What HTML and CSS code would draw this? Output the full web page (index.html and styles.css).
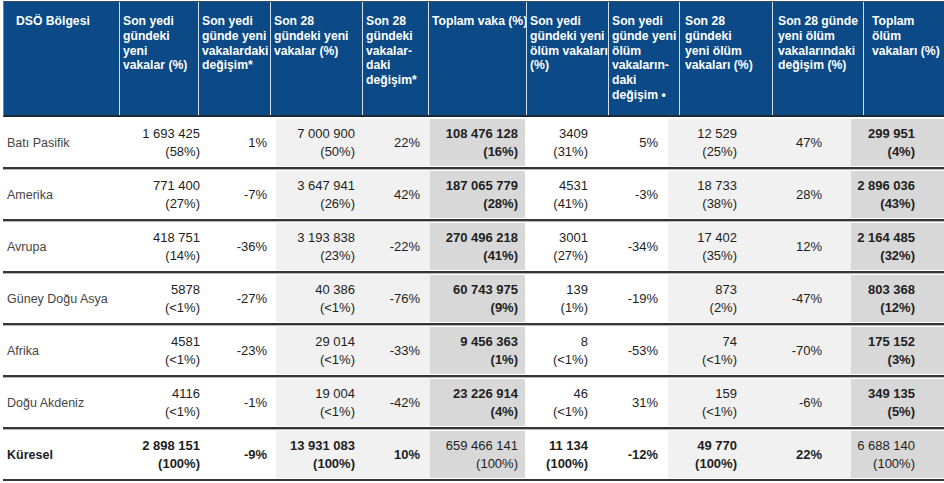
FILE: index.html
```html
<!DOCTYPE html>
<html lang="tr">
<head>
<meta charset="utf-8">
<title>DSÖ Bölgesi</title>
<link rel="stylesheet" href="styles.css">
</head>
<body>
<div class="table">
  <div class="head">
    <div class="h h1">DSÖ Bölgesi</div>
    <div class="h">Son yedi<br>gündeki<br>yeni<br>vakalar (%)</div>
    <div class="h">Son yedi<br>günde yeni<br>vakalardaki<br>değişim*</div>
    <div class="h">Son 28<br>gündeki yeni<br>vakalar (%)</div>
    <div class="h">Son 28<br>gündeki<br>vakalar-<br>daki<br>değişim*</div>
    <div class="h h6">Toplam vaka (%)</div>
    <div class="h">Son yedi<br>gündeki yeni<br>ölüm vakaları<br>(%)</div>
    <div class="h">Son yedi<br>günde yeni<br>ölüm<br>vakaların-<br>daki<br>değişim •</div>
    <div class="h h9">Son 28<br>gündeki<br>yeni ölüm<br>vakaları (%)</div>
    <div class="h h9">Son 28 günde<br>yeni ölüm<br>vakalarındaki<br>değişim (%)</div>
    <div class="h h11">Toplam<br>ölüm<br>vakaları (%)</div>
  </div>

  <div class="row">
    <div class="c name">Batı Pasifik</div>
    <div class="c n c2">1 693 425<br>(58%)</div>
    <div class="c n c3">1%</div>
    <div class="c n c4 lg">7 000 900<br>(50%)</div>
    <div class="c n c5 lg">22%</div>
    <div class="c n c6 dg b">108 476 128<br>(16%)</div>
    <div class="c n c7">3409<br>(31%)</div>
    <div class="c n c8">5%</div>
    <div class="c n c9 lg">12 529<br>(25%)</div>
    <div class="c n c10 lg">47%</div>
    <div class="c n c11 dg b">299 951<br>(4%)</div>
  </div>

  <div class="row">
    <div class="c name">Amerika</div>
    <div class="c n c2">771 400<br>(27%)</div>
    <div class="c n c3">-7%</div>
    <div class="c n c4 lg">3 647 941<br>(26%)</div>
    <div class="c n c5 lg">42%</div>
    <div class="c n c6 dg b">187 065 779<br>(28%)</div>
    <div class="c n c7">4531<br>(41%)</div>
    <div class="c n c8">-3%</div>
    <div class="c n c9 lg">18 733<br>(38%)</div>
    <div class="c n c10 lg">28%</div>
    <div class="c n c11 dg b">2 896 036<br>(43%)</div>
  </div>

  <div class="row">
    <div class="c name">Avrupa</div>
    <div class="c n c2">418 751<br>(14%)</div>
    <div class="c n c3">-36%</div>
    <div class="c n c4 lg">3 193 838<br>(23%)</div>
    <div class="c n c5 lg">-22%</div>
    <div class="c n c6 dg b">270 496 218<br>(41%)</div>
    <div class="c n c7">3001<br>(27%)</div>
    <div class="c n c8">-34%</div>
    <div class="c n c9 lg">17 402<br>(35%)</div>
    <div class="c n c10 lg">12%</div>
    <div class="c n c11 dg b">2 164 485<br>(32%)</div>
  </div>

  <div class="row">
    <div class="c name">Güney Doğu Asya</div>
    <div class="c n c2">5878<br>(&lt;1%)</div>
    <div class="c n c3">-27%</div>
    <div class="c n c4 lg">40 386<br>(&lt;1%)</div>
    <div class="c n c5 lg">-76%</div>
    <div class="c n c6 dg b">60 743 975<br>(9%)</div>
    <div class="c n c7">139<br>(1%)</div>
    <div class="c n c8">-19%</div>
    <div class="c n c9 lg">873<br>(2%)</div>
    <div class="c n c10 lg">-47%</div>
    <div class="c n c11 dg b">803 368<br>(12%)</div>
  </div>

  <div class="row">
    <div class="c name">Afrika</div>
    <div class="c n c2">4581<br>(&lt;1%)</div>
    <div class="c n c3">-23%</div>
    <div class="c n c4 lg">29 014<br>(&lt;1%)</div>
    <div class="c n c5 lg">-33%</div>
    <div class="c n c6 dg b">9 456 363<br>(1%)</div>
    <div class="c n c7">8<br>(&lt;1%)</div>
    <div class="c n c8">-53%</div>
    <div class="c n c9 lg">74<br>(&lt;1%)</div>
    <div class="c n c10 lg">-70%</div>
    <div class="c n c11 dg b">175 152<br>(3%)</div>
  </div>

  <div class="row">
    <div class="c name">Doğu Akdeniz</div>
    <div class="c n c2">4116<br>(&lt;1%)</div>
    <div class="c n c3">-1%</div>
    <div class="c n c4 lg">19 004<br>(&lt;1%)</div>
    <div class="c n c5 lg">-42%</div>
    <div class="c n c6 dg b">23 226 914<br>(4%)</div>
    <div class="c n c7">46<br>(&lt;1%)</div>
    <div class="c n c8">31%</div>
    <div class="c n c9 lg">159<br>(&lt;1%)</div>
    <div class="c n c10 lg">-6%</div>
    <div class="c n c11 dg b">349 135<br>(5%)</div>
  </div>

  <div class="row">
    <div class="c name b">Küresel</div>
    <div class="c n c2 b">2 898 151<br>(100%)</div>
    <div class="c n c3 b">-9%</div>
    <div class="c n c4 lg b">13 931 083<br>(100%)</div>
    <div class="c n c5 lg b">10%</div>
    <div class="c n c6 dg">659 466 141<br>(100%)</div>
    <div class="c n c7 b">11 134<br>(100%)</div>
    <div class="c n c8 b">-12%</div>
    <div class="c n c9 lg b">49 770<br>(100%)</div>
    <div class="c n c10 lg b">22%</div>
    <div class="c n c11 dg">6 688 140<br>(100%)</div>
  </div>
</div>
</body>
</html>
```

FILE: styles.css
```css
html, body {
  margin: 0;
  padding: 0;
  background: #ffffff;
}

.table {
  width: 941px;
  margin: 1px 0 0 3px;
  font-family: "Liberation Sans", Arial, sans-serif;
}

.head {
  display: grid;
  grid-template-columns: 115px 79px 72px 92px 66px 98px 82px 71px 93px 91px 82px;
  height: 116px;
  background: #0b4a86;
  border-top: 1px solid #3a4b5c;
  border-left: 1px solid #6f8296;
  border-bottom: 2px solid #1c2b3a;
  box-sizing: border-box;
}

.h {
  color: #ffffff;
  font-weight: bold;
  font-size: 12.2px;
  line-height: 14.8px;
  padding: 12px 0 0 3px;
  border-left: 1.5px solid #d7e0ea;
  white-space: nowrap;
  overflow: hidden;
}

.h1 {
  border-left: none;
  padding-left: 12px;
}

.h6 { padding-left: 3px; }
.h9 { padding-left: 5px; }
.h11 { padding-left: 8px; }

.row {
  display: grid;
  grid-template-columns: 115px 89px 69px 86px 68px 95px 70px 73px 77px 106px 93px;
  height: 52px;
  box-sizing: border-box;
  padding: 2px 0 1px;
  border-bottom: 2px solid #363636;
  box-shadow: 0 1px 0 #b5b5b5;
}

.c {
  display: flex;
  flex-direction: column;
  justify-content: center;
  font-size: 13px;
  line-height: 18px;
  color: #1e1e1e;
  white-space: nowrap;
  padding-top: 1px;
}

.name {
  padding-left: 4px;
  font-size: 12.5px;
  color: #454545;
  align-items: flex-start;
}

.name.b {
  color: #1e1e1e;
}

.n {
  align-items: flex-end;
  text-align: right;
}

.b { font-weight: bold; }

.lg { background: #f1f1f1; }
.dg { background: #d8d8d8; }

.c2 { padding-right: 7px; }
.c3 { padding-right: 9px; }
.c4 { padding-right: 7px; }
.c5 { padding-right: 10px; }
.c6 { padding-right: 7px; }
.c7 { padding-right: 7px; }
.c8 { padding-right: 10px; }
.c9 { padding-right: 8px; }
.c10 { padding-right: 29px; }
.c11 { padding-right: 29px; }
```
